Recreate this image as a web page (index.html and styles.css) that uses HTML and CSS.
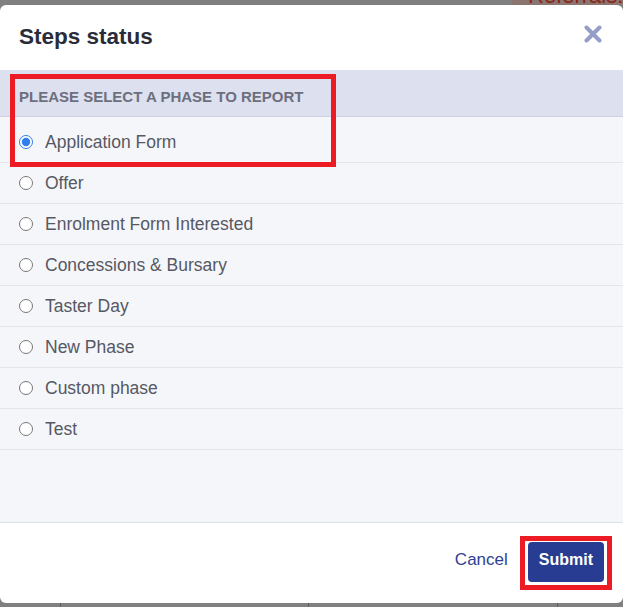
FILE: index.html
```html
<!DOCTYPE html>
<html lang="en">
<head>
    <meta charset="UTF-8">
    <meta name="viewport" content="width=device-width, initial-scale=1.0">
    <title>Steps status</title>
    <link rel="stylesheet" href="styles.css">
</head>
<body id="page">
    <!-- bit of the page showing above the dialog -->
    <div class="page-top">
        <div class="page-top-fill"></div>
        <div class="page-top-alert"><span>Referrals! E</span></div>
    </div>

    <div class="modal">
        <div class="modal-header">
            <h2 class="modal-title">Steps status</h2>
            <button class="modal-close" aria-label="Close">
                <svg width="18" height="18" viewBox="0 0 18 18">
                    <path d="M2.5 2.5 L15.5 15.5 M15.5 2.5 L2.5 15.5" stroke="#959dc9" stroke-width="4" stroke-linecap="round"/>
                </svg>
            </button>
        </div>

        <div class="section-label">Please select a phase to report</div>

        <div class="phase-list">
            <label class="phase-row"><input type="radio" name="phase" checked> Application Form</label>
            <label class="phase-row"><input type="radio" name="phase"> Offer</label>
            <label class="phase-row"><input type="radio" name="phase"> Enrolment Form Interested</label>
            <label class="phase-row"><input type="radio" name="phase"> Concessions &amp; Bursary</label>
            <label class="phase-row"><input type="radio" name="phase"> Taster Day</label>
            <label class="phase-row"><input type="radio" name="phase"> New Phase</label>
            <label class="phase-row"><input type="radio" name="phase"> Custom phase</label>
            <label class="phase-row"><input type="radio" name="phase"> Test</label>
        </div>

        <div class="modal-footer">
            <a href="#" class="btn-cancel">Cancel</a>
            <button class="btn-submit">Submit</button>
        </div>
    </div>

    <!-- bit of the page showing below the dialog -->
    <div class="page-bottom">
        <div></div><div></div><div></div><div></div>
    </div>

    <!-- highlight boxes -->
    <div class="mark mark-phase"></div>
    <div class="mark mark-submit"></div>
</body>
</html>
```

FILE: styles.css
```css
* {
    box-sizing: border-box;
}

#page {
    margin: 0;
    width: 623px;
    height: 607px;
    overflow: hidden;
    background-color: #808080;
    font-family: "Liberation Sans", Arial, sans-serif;
    display: flex;
    flex-direction: column;
    position: relative;
}

.page-top {
    display: flex;
    height: 5px;
    overflow: hidden;
}
.page-top-fill {
    width: 512px;
    flex-shrink: 0;
}
.page-top-alert {
    flex: 1;
    min-width: 0;
    overflow: hidden;
    background-color: #8b7571;
    padding-left: 16px;
}
.page-top-alert span {
    display: block;
    margin-top: -15px;
    font-size: 22px;
    line-height: 22px;
    color: #8a2616;
    white-space: nowrap;
}

.modal {
    height: 598px;
    background-color: #fff;
    border-radius: 6px;
    overflow: hidden;
    display: flex;
    flex-direction: column;
}

.modal-header {
    height: 65px;
    display: flex;
    align-items: center;
    justify-content: space-between;
    padding: 0 21px 2px 19px;
}
.modal-title {
    margin: 0;
    font-size: 22.5px;
    font-weight: bold;
    color: #2a2d39;
}
.modal-close {
    border: none;
    background: none;
    padding: 0;
    width: 18px;
    height: 18px;
    margin-top: -6px;
    cursor: pointer;
}
.modal-close svg {
    display: block;
}

.section-label {
    height: 47px;
    padding: 18px 19px 0;
    background-color: #dde0ee;
    border-bottom: 1px solid #ccd0e2;
    font-size: 15px;
    line-height: 18px;
    font-weight: bold;
    text-transform: uppercase;
    color: #6c6f7e;
}

.phase-list {
    flex: 1;
    background-color: #f5f6fa;
    padding-top: 5px;
    border-bottom: 1px solid #dde0ea;
}
.phase-row {
    display: flex;
    align-items: center;
    gap: 12px;
    height: 41px;
    padding-left: 19px;
    border-bottom: 1px solid #e3e5ed;
    font-size: 17.5px;
    color: #565963;
    cursor: pointer;
}
.phase-row input {
    margin: 0;
    width: 14px;
    height: 14px;
    accent-color: #2f7eec;
}

.modal-footer {
    height: 80px;
    display: flex;
    justify-content: flex-end;
    align-items: baseline;
    gap: 20px;
    padding: 19px 19px 0;
}
.btn-cancel {
    font-size: 17px;
    color: #2e4192;
    text-decoration: none;
}
.btn-submit {
    border: none;
    border-radius: 4px;
    background-color: #283d91;
    color: #fff;
    font-family: inherit;
    font-size: 16px;
    font-weight: bold;
    line-height: 22px;
    padding: 7px 11px 11px;
    cursor: pointer;
}

.page-bottom {
    flex: 1;
    display: grid;
    grid-template-columns: 60px 248px 249px 1fr;
}
.page-bottom div + div {
    border-left: 1px solid #5e5e5e;
}

/* red highlight boxes drawn over the dialog */
.mark {
    position: absolute;
    border: 5px solid #ed1c24;
}
.mark-phase {
    left: 10px;
    top: 74px;
    width: 326px;
    height: 93px;
}
.mark-submit {
    left: 520px;
    top: 536px;
    width: 92px;
    height: 54px;
}
```
